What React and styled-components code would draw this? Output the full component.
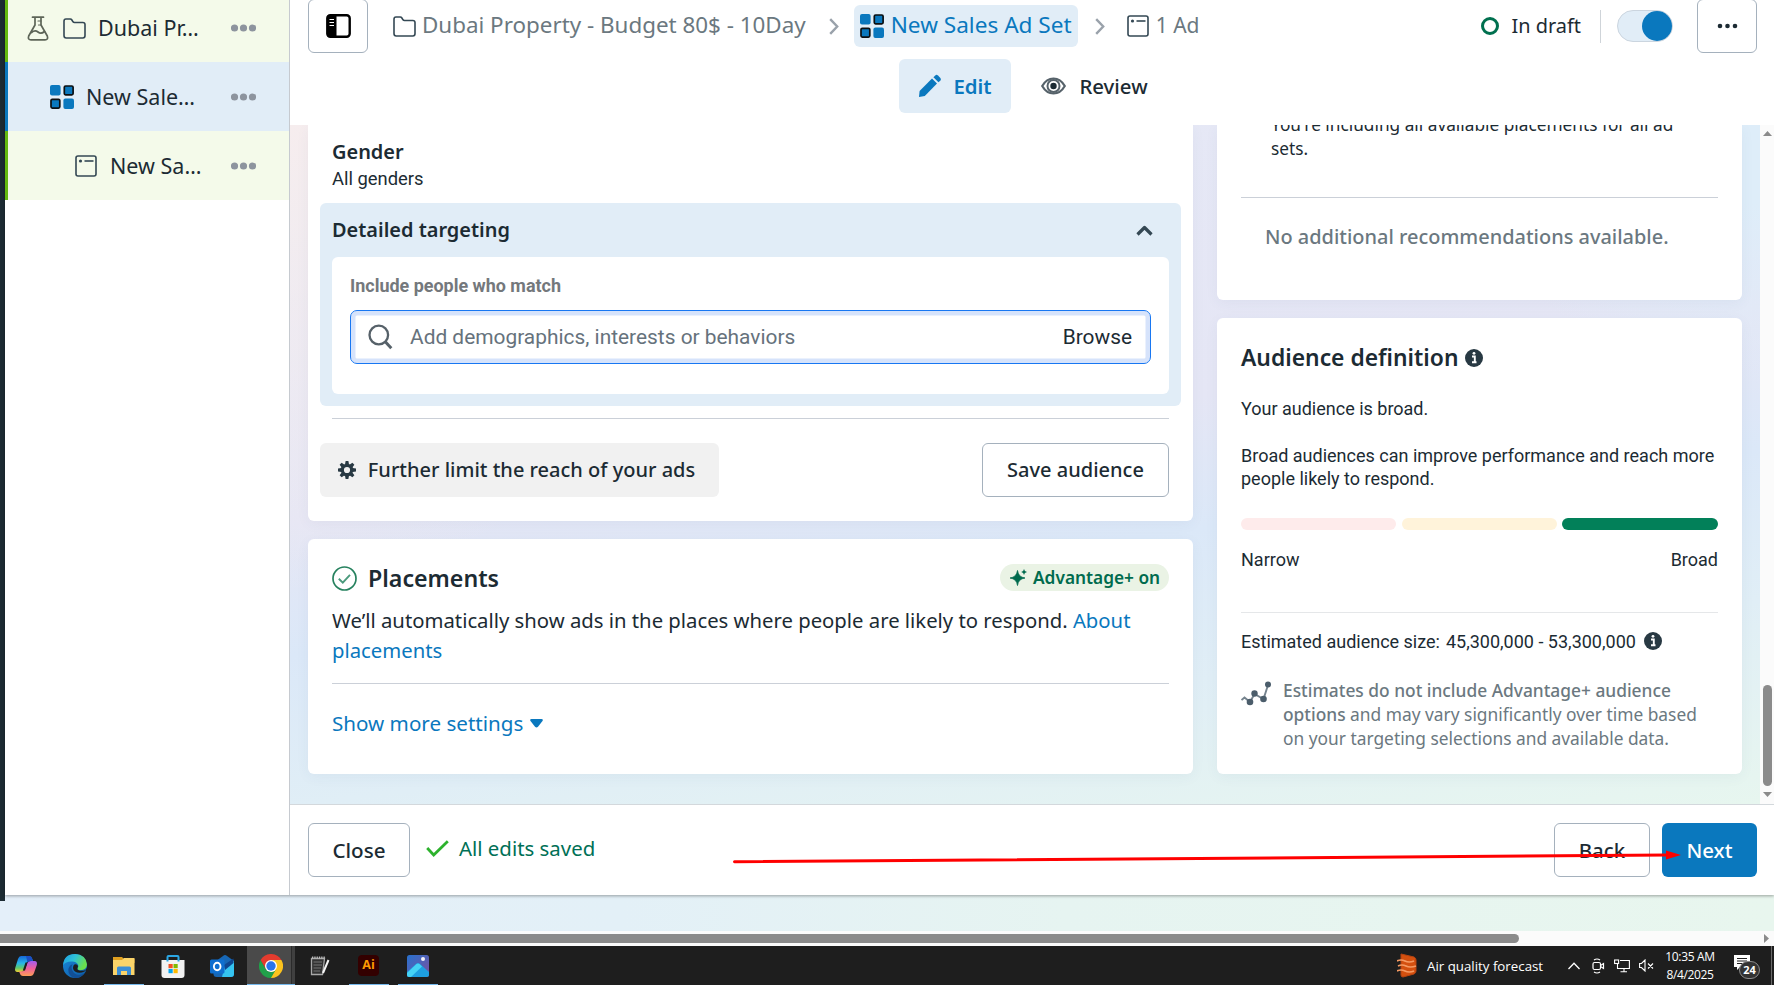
import React from 'react';
import styled, { createGlobalStyle, css } from 'styled-components';

const ui = `"Noto Sans", "Open Sans", sans-serif`;
const roboto = `Roboto, "Liberation Sans", sans-serif`;
const ink = '#1c2b33';
const blue = '#0a78be';
const pale = '#e1edf7';
const muted = '#6b7880';

const Global = createGlobalStyle`
  * { box-sizing: border-box; }
  body { margin: 0; overflow: hidden; font-family: ${ui}; color: ${ink}; }
  svg { display: block; flex: none; }
  p, h2, h3 { margin: 0; }
  button { font-family: inherit; color: inherit; }
`;

/* ---------- shell ---------- */
const Screen = styled.div`
  width: 1774px; height: 985px; overflow: hidden;
  display: flex; flex-direction: column; background: #fff;
`;
const Page = styled.div`
  height: 931px; display: flex; align-items: flex-start;
  background: linear-gradient(90deg, #e4eff9 0%, #e3f0f7 35%, #e6f4f1 60%, #e8f6ee 100%);
`;
const Rail = styled.div`width: 5px; height: 901px; background: #1c2b33;`;
const Panel = styled.div`
  flex: 1; height: 895px; display: flex; background: #fff;
  box-shadow: 0 1px 3px rgba(0, 0, 0, 0.35);
`;

/* ---------- sidebar ---------- */
const Sidebar = styled.nav`width: 285px; border-right: 1px solid #c6cad0;`;
const TreeRow = styled.div`
  height: ${p => p.$h || 69}px;
  display: flex; align-items: center;
  padding: 0 33px ${p => p.$pb || 0}px ${p => p.$indent}px;
  border-left: 3px solid ${p => (p.$selected ? blue : '#64b90f')};
  background: ${p => (p.$selected ? pale : '#f4faea')};
`;
const TreeLabel = styled.span`
  flex: 1; margin-left: ${p => p.$gap}px;
  font-size: 21.5px; line-height: 30px; font-weight: 400; white-space: nowrap;
`;

/* ---------- header ---------- */
const Main = styled.main`flex: 1; display: flex; flex-direction: column;`;
const Header = styled.header`height: 125px; padding: 0 17px 0 18px;`;
const Crumbs = styled.div`height: 52px; display: flex; align-items: center;`;
const SquareButton = styled.button`
  width: 60px; height: 54px; flex: none; padding: 0;
  display: flex; align-items: center; justify-content: center;
  background: #fff; border: 1px solid #a5b1bd; border-radius: 6px;
`;
const Crumb = styled.div`
  display: flex; align-items: center; gap: ${p => p.$gap}px;
  height: 42px; margin-left: ${p => p.$ml}px;
  font-size: ${p => p.$size || 22.4}px; line-height: 28px; white-space: nowrap; color: ${muted};
  ${p => p.$active && css`
    width: 224px; padding-left: 6px; border-radius: 6px;
    background: ${pale}; color: ${blue};
  `}
`;
const CrumbText = styled.span`padding-bottom: 2px;`;
const ChevronSlot = styled.span`margin-left: ${p => p.$ml}px;`;
const Status = styled.div`
  display: flex; align-items: center; gap: 13px; margin-left: auto;
  padding-right: 19px; height: 33px; border-right: 1px solid #cfd4d9;
  font-size: 19.9px;
`;
const StatusRing = styled.span`
  width: 18px; height: 18px; border: 3px solid #00704f; border-radius: 50%;
`;
const Toggle = styled.span`
  width: 56px; height: 32px; margin: 0 24px 0 16px; border-radius: 16px;
  display: flex; justify-content: flex-end; align-items: center;
  background: ${pale}; border: 1px solid #cbd5df;
`;
const Knob = styled.span`width: 30px; height: 30px; border-radius: 50%; background: ${blue};`;
const ModeTabs = styled.div`display: flex; justify-content: center; gap: 11px; margin-top: 7px;`;
const ModeTab = styled.div`
  height: 54px; padding: 0 18px 1px 19px; border-radius: 6px;
  display: flex; align-items: center; gap: ${p => p.$gap}px;
  font-size: 20.4px;
  ${p => p.$active ? css`width: 112px; background: ${pale}; color: ${blue}; font-weight: 600;` : css`font-weight: 500;`}
`;

/* ---------- content ---------- */
const Content = styled.div`
  height: 679px; display: flex; overflow: hidden;
`;
const Canvas = styled.div`
  width: 1470px; display: flex; gap: 24px; padding-left: 18px;
  background:
    radial-gradient(ellipse 420px 470px at 0 0, #f6edee 0%, rgba(246, 237, 238, 0) 100%),
    radial-gradient(ellipse 300px 260px at 100% 0, #deedf9 30%, rgba(222, 237, 249, 0) 100%),
    linear-gradient(172deg, #e6e9f6 0%, #e5e6f5 45%, #dbe8f8 60%, #e0eef6 77%, #e7f6ef 100%);
`;
const Column = styled.div`
  width: ${p => p.$w}px; display: flex; flex-direction: column; gap: 18px;
`;
const Card = styled.section`
  height: ${p => p.$h}px; padding: ${p => p.$pt || 0}px 24px 0; background: #fff;
  border-radius: ${p => (p.$cut ? '0 0 6px 6px' : '6px')};
  box-shadow: 0 3px 14px rgba(60, 70, 110, 0.05);
`;
const Rule = styled.div`
  height: 1px; margin-top: ${p => p.$mt}px; background: ${p => p.$color || '#cbd0d8'};
`;
const FieldName = styled.h3`font-size: 19.95px; line-height: 26px; font-weight: 600;`;
const FieldValue = styled.p`font: 400 18.4px/24px ${roboto}; margin-top: 2px;`;
const Targeting = styled.div`
  height: 203px; margin: 12px -12px 0; padding: 0 12px;
  background: ${pale}; border-radius: 6px;
`;
const TargetingHead = styled.div`
  height: 54px; padding-right: 16px; display: flex; align-items: center; justify-content: space-between;
`;
const TargetingBody = styled.div`
  height: 137px; padding: 17px 18px 0; background: #fff; border-radius: 6px;
`;
const InputLabel = styled.p`font: 700 17.95px/24px ${roboto}; color: #74787c;`;
const SearchBox = styled.div`
  height: 54px; margin-top: 12px; padding: 0 18px 0 17px;
  display: flex; align-items: center;
  border: 1px solid #1877f2; border-radius: 7px; box-shadow: inset 0 0 0 4.5px #d6e3fb;
  font: 400 20.9px/28px ${roboto};
`;
const Placeholder = styled.span`flex: 1; margin-left: 17px; padding-bottom: 1px; color: #66727c;`;
const ActionRow = styled.div`
  display: flex; justify-content: space-between; margin: 24px 0 0 -12px;
`;
const Button = styled.button`
  width: ${p => p.$w}px; height: 54px; padding: 0; border-radius: 6px;
  display: flex; align-items: center; justify-content: center; gap: 12px;
  font-size: ${p => p.$size || 20}px; line-height: 28px; white-space: nowrap; font-weight: 500;
  ${p => p.$kind === 'grey' && css`background: #f1f1f1; border: 0; padding-right: 6px;`}
  ${p => p.$kind === 'primary' && css`background: ${blue}; border: 0; color: #fff;`}
  ${p => !p.$kind && css`background: #fff; border: 1px solid #a5b1bd;`}
`;
const SectionHead = styled.div`height: 30px; display: flex; align-items: center;`;
const SectionTitle = styled.h2`
  font-size: ${p => p.$size}px; line-height: 30px; font-weight: 600; margin-left: ${p => p.$ml || 0}px;
  white-space: nowrap;
`;
const Badge = styled.span`
  width: 169px; height: 27px; margin: 0 0 1px auto; border-radius: 14px; padding: 0 0 1px 10px;
  display: flex; align-items: center; gap: 6px; white-space: nowrap;
  background: #eaf3e5; color: #006b4e; font-size: 17.3px; font-weight: 600;
`;
const Paragraph = styled.p`margin-top: 12px; font-size: 20.3px; line-height: 30px;`;
const Link = styled.span`color: ${blue};`;
const MoreLink = styled.div`
  margin-top: 24px; display: flex; align-items: center; gap: 7px;
  color: ${blue}; font-size: 20.6px; line-height: 30px;
`;

/* ---------- right column ---------- */
const Recommendation = styled.p`
  margin-top: -12px; padding-left: 30px; font-size: 17.25px; line-height: 24px; white-space: nowrap;
`;
const EmptyNote = styled.p`
  margin: 24px 0 0 24px; font-size: 19.95px; line-height: 30px; font-weight: 500; color: ${muted}; white-space: nowrap;
`;
const Body = styled.p`
  margin-top: ${p => p.$mt}px; font: 400 18px/23px ${roboto}; white-space: nowrap;
`;
const Meter = styled.div`
  margin-top: 28px; display: grid; grid-template-columns: 155px 155px 156px;
  justify-content: space-between;
`;
const MeterPart = styled.span`height: 12px; border-radius: 6px; background: ${p => p.$color};`;
const MeterEnds = styled.div`
  margin-top: 18px; display: flex; justify-content: space-between; font: 400 18px/23px ${roboto};
`;
const SizeRow = styled.div`
  margin-top: 17px; display: flex; align-items: center; font: 400 18px/23px ${roboto};
  svg { margin-bottom: 2px; }
`;
const SizeValue = styled.span`margin: 0 8px 0 6px;`;
const Estimate = styled.div`
  margin-top: 25px; display: flex; gap: 12px; color: ${muted};
  font-size: 17.35px; line-height: 24px; white-space: nowrap;
  svg { margin-top: 3px; }
  b { font-weight: 500; }
`;

/* ---------- scrollbars ---------- */
const VScroll = styled.div`
  width: 14px; background: #fbfbfb; display: flex; flex-direction: column; align-items: center;
  padding: 6px 0 7px 1px; justify-content: space-between;
`;
const VThumb = styled.div`width: 9px; height: 101px; border-radius: 5px; background: #8b8b8b;
  margin: auto 0 6px;`;
const HScroll = styled.div`
  height: 15px; background: #fbfbfb; display: flex; align-items: center; justify-content: space-between;
  padding-right: 5px;
`;
const HThumb = styled.div`width: 1519px; height: 9px; background: #8b8b8b; border-radius: 0 5px 5px 0;`;

/* ---------- footer ---------- */
const Footer = styled.footer`
  position: relative; height: 91px; padding: 18px 17px 0 18px; border-top: 1px solid #d3d8dc;
  display: flex; align-items: flex-start;
`;
const Saved = styled.div`
  display: flex; align-items: center; gap: 10px; margin: 10px 0 0 16px;
  font-size: 20.4px; line-height: 30px; color: #007056;
`;
const SavedText = styled.span`padding-bottom: 1px;`;
const FooterActions = styled.div`margin-left: auto; display: flex; gap: 12px;`;
const ArrowOverlay = styled.svg`position: absolute; left: 440px; top: 42px;`;

/* ---------- taskbar ---------- */
const Taskbar = styled.div`
  height: 39px; display: flex; background: #1e1e1e; padding-left: 1px; color: #fff;
  font-family: "Open Sans", "Noto Sans", sans-serif;
`;
const TaskItem = styled.div`
  width: 49px; height: 39px; display: flex; flex-direction: column; align-items: center;
  justify-content: space-between; padding-top: 8px;
  ${p => p.$focused && css`
    background: linear-gradient(90deg, #4a4a4a 44px, #2b2b2b 44px, #2b2b2b 45px, #404040 45px);
    width: 48px; margin: 0 0 0 1px;
  `}
`;
const Running = styled.span`
  width: ${p => p.$w || 40}px; height: 1px;
  background: ${p => (p.$on ? '#76b9ed' : 'transparent')};
`;
const Tray = styled.div`
  margin-left: auto; display: flex; align-items: center; height: 39px; width: 377px;
`;
const Weather = styled.span`width: 116px; margin: 0 25px 0 10px; font-size: 13.3px; white-space: nowrap;`;
const TrayIcons = styled.div`display: flex; align-items: center; gap: 9px;`;
const Clock = styled.div`
  width: 50px; margin-left: 11px; text-align: center; font-size: 12px; line-height: 18px;
  letter-spacing: -0.35px; white-space: nowrap;
`;
const Notice = styled.div`position: relative; width: 26px; height: 24px; margin: 2px 0 0 19px;`;
const Count = styled.span`
  position: absolute; left: 5px; top: 6px; width: 21px; height: 18px; border-radius: 9px;
  border: 1px solid #8a8a8a; background: #333; text-align: center;
  font-size: 11px; line-height: 16px; font-weight: 700;
`;
const DesktopEdge = styled.span`width: 1px; height: 39px; margin-left: auto; margin-right: 2px; background: #6a6a6a;`;

/* ---------- icons ---------- */
const Dots = ({ c = '#8d949e', r = 3.6, gap = 9, w = 25 }) => (
  <svg width={w} height="10" viewBox={`0 0 ${w} 10`} fill={c}>
    {[-1, 0, 1].map(i => <circle key={i} cx={w / 2 + i * gap} cy="5" r={r} />)}
  </svg>
);
const Folder = ({ c = '#344854' }) => (
  <svg width="23" height="21" viewBox="0 0 23 21" fill="none" stroke={c} strokeWidth="1.6" strokeLinejoin="round">
    <path d="M1 3.2Q1 1 3 1H7.2Q8.3 1 8.9 2L10 3.8Q10.500 4.500 11.500 4.500H19.800Q22 4.500 22 6.600V17.600Q22 20 19.800 20H3.200Q1 20 1 17.600Z" />
  </svg>
);
const Flask = () => (
  <svg width="22" height="25" viewBox="0 0 22 25" fill="none" stroke="#5d6558" strokeWidth="1.700" strokeLinejoin="round" strokeLinecap="round">
    <path d="M5.500 1.200H16.500M8 1.500V9L1.700 20Q.5 23.800 4 23.800H18Q21.500 23.800 20.300 20L14 9V1.500" />
    <path d="M4.500 16.500Q8 13.500 11 16T17.500 15.500" />
    <path d="M11 5H14M11.500 9H14" strokeWidth="1.200" />
  </svg>
);
const Grid = () => (
  <svg width="24" height="24" viewBox="0 0 24 24" fill="#0a78be">
    <rect width="10.600" height="10.400" rx="2" />
    <rect x="14.300" y="1" width="8.800" height="8.800" rx="1.300" stroke="#0b0f12" strokeWidth="1.700" />
    <rect x="1" y="14.300" width="8.800" height="8.800" rx="1.300" stroke="#0b0f12" strokeWidth="1.700" />
    <rect x="13.400" y="13.600" width="10.600" height="10.400" rx="2" />
  </svg>
);
const AdIcon = () => (
  <svg width="22" height="22" viewBox="0 0 22 22" fill="none" stroke="#344854" strokeWidth="1.600">
    <rect x="1" y="1" width="20" height="20" rx="2" />
    <path d="M9.500 6H18.500" />
    <circle cx="5.500" cy="6" r="1.600" fill="#344854" stroke="none" />
  </svg>
);
const PanelIcon = () => (
  <svg width="25" height="24" viewBox="0 0 25 24">
    <rect x="1.300" y="1.300" width="22.400" height="21.400" rx="3" fill="#fff" stroke="#000" strokeWidth="2.400" />
    <path d="M3 1H10.500V23H3Q1 23 1 20V4Q1 1 3 1Z" fill="#000" />
    <path d="M3.500 5.500H8M3.500 8.500H8M3.500 11.500H8" stroke="#fff" strokeWidth="1.200" />
  </svg>
);
const ChevronRight = () => (
  <svg width="10" height="17" viewBox="0 0 10 17" fill="none" stroke="#9aa2ab" strokeWidth="2.400">
    <path d="M1.200 1.200L8.200 8.500L1.200 15.800" />
  </svg>
);
const ChevronUp = () => (
  <svg width="17" height="11" viewBox="0 0 17 11" fill="none" stroke="#344854" strokeWidth="3.200" strokeLinejoin="round">
    <path d="M1.500 9.500L8.500 2.500L15.500 9.500" />
  </svg>
);
const Pencil = () => (
  <svg width="24" height="24" viewBox="0 0 24 24" fill={blue}>
    <path d="M1 23L1.600 17L14 4.600L19 9.600L6.800 22Z" />
    <path d="M15.400 3.200L17.300 1.400Q18.600 .3 20 1.500L22.400 4Q23.500 5.300 22.400 6.600L20.500 8.300Z" />
  </svg>
);
const Eye = () => (
  <svg width="25" height="18" viewBox="0 0 25 18" fill="none" stroke="#56626a">
    <path d="M1.200 9Q5.500 1.500 12.500 1.500T23.800 9Q19.500 16.500 12.500 16.500T1.200 9Z" strokeWidth="2.200" />
    <circle cx="12.500" cy="9" r="6" strokeWidth="2" />
    <circle cx="12.500" cy="9" r="3.200" fill="#1c2b33" stroke="none" />
  </svg>
);
const Search = () => (
  <svg width="25" height="26" viewBox="0 0 25 26" fill="none" stroke="#566169" strokeWidth="2.300">
    <circle cx="10.800" cy="11" r="9.300" />
    <path d="M17.300 17.800L23.300 24.300" strokeWidth="3" />
  </svg>
);
const Gear = () => (
  <svg width="18" height="18" viewBox="-9 -9 18 18" fill="#283943">
    {[0, 45, 90, 135, 180, 225, 270, 315].map(a => (
      <path key={a} d="M-2-5.500L-1.400-9H1.400L2-5.500Z" transform={`rotate(${a})`} />
    ))}
    <circle r="4.700" fill="none" stroke="#283943" strokeWidth="3.200" />
  </svg>
);
const CheckCircle = () => (
  <svg width="25" height="25" viewBox="0 0 25 25" fill="none" stroke="#27825f" strokeWidth="1.700">
    <circle cx="12.500" cy="12.500" r="11.500" />
    <path d="M6.800 12.800L10.800 16.600L18 8.800" strokeWidth="1.900" stroke="#4a9a7c" />
  </svg>
);
const Sparkle = () => (
  <svg width="17" height="17" viewBox="0 0 17 17" fill="#006b4e">
    <path d="M7.500 1.500Q8.300 8.200 15 9Q8.300 9.800 7.500 16.500Q6.700 9.800 0 9Q6.700 8.200 7.500 1.500Z" stroke="#006b4e" strokeWidth=".8" />
    <path d="M14 0Q14.300 2.500 17 3Q14.300 3.400 14 6Q13.700 3.400 11.200 3Q13.700 2.500 14 0Z" />
  </svg>
);
const Info = () => (
  <svg width="18" height="18" viewBox="0 0 18 18">
    <circle cx="9" cy="9" r="9" fill="#283943" />
    <path d="M7 7.500H9.800V13M7 13.300H11.500" stroke="#fff" strokeWidth="1.900" fill="none" />
    <circle cx="9" cy="4.300" r="1.400" fill="#fff" />
  </svg>
);
const Trend = () => (
  <svg width="30" height="25" viewBox="0 0 30 25" fill="#4b5d6b">
    <path d="M.5 19L3.500 16.500L9 21L13.500 13L22.500 18L27 4" fill="none" stroke="#75838e" strokeWidth="1.900" />
    <circle cx="9" cy="21" r="3.300" /><circle cx="13.500" cy="12.500" r="3.200" />
    <circle cx="22.500" cy="18" r="3.300" /><circle cx="27" cy="3.500" r="3" />
  </svg>
);
const Caret = ({ w = 13, h = 9, c = blue, d = 'M1.500 0H11.500Q13.500 0 12.500 2L8 7.800Q6.500 9 5 7.800L.5 2Q-.5 0 1.500 0Z' }) => (
  <svg width={w} height={h} viewBox={`0 0 ${w} ${h}`} fill={c}><path d={d} /></svg>
);
const Tick = () => (
  <svg width="23" height="17" viewBox="0 0 23 17" fill="none" stroke="#2db22d" strokeWidth="2.800">
    <path d="M1.200 8L7.700 15L21.800 1.200" />
  </svg>
);

const Copilot = () => (
  <svg width="24" height="24" viewBox="0 0 24 24">
    <defs>
      <linearGradient id="cpA" x1="0" y1="0" x2="0" y2="1"><stop offset="0" stopColor="#1668d8" /><stop offset=".45" stopColor="#27b5e8" /><stop offset=".75" stopColor="#5fca6b" /><stop offset="1" stopColor="#f2cf31" /></linearGradient>
      <linearGradient id="cpB" x1="0" y1="0" x2="0" y2="1"><stop offset="0" stopColor="#a45cf0" /><stop offset=".5" stopColor="#ef5f9c" /><stop offset="1" stopColor="#fb9d55" /></linearGradient>
    </defs>
    <path d="M7 2H15Q17.500 2 18.300 5L19 7H15.500Q13 7 12 10L10.500 15Q9.500 18 7 18H3.500Q.3 18 1.200 14L4 5Q5 2 7 2Z" fill="url(#cpA)" />
    <path d="M17 7H20.500Q23.700 7 22.800 11L20 19Q19 22 16.500 22H9Q6.500 22 5.700 19L5 17.500H7.500Q10.500 17.500 11.500 14L13.300 9Q14 7 17 7Z" fill="url(#cpB)" />
    <path d="M12 2H15Q17.500 2 18.300 5L19 7H15.500L13.500 8.500Z" fill="#1b4fc4" />
    <path d="M11.500 8.500H13.500L11 16.500H8.800Z" fill="#1e1e1e" />
  </svg>
);
const Edge = () => (
  <svg width="24" height="24" viewBox="0 0 24 24">
    <defs>
      <linearGradient id="edA" x1="0" y1="0" x2="1" y2=".4"><stop offset="0" stopColor="#1b9de2" /><stop offset=".5" stopColor="#2fc2d8" /><stop offset="1" stopColor="#6be04b" /></linearGradient>
      <linearGradient id="edB" x1="0" y1="0" x2="1" y2="1"><stop offset="0" stopColor="#1b88d8" /><stop offset="1" stopColor="#0c59a4" /></linearGradient>
    </defs>
    <circle cx="12" cy="12" r="12" fill="url(#edB)" />
    <path d="M.1 11Q1 0 12 0Q23 .5 24 10.500Q23.500 16 17.500 16.300Q13.500 16 14.500 14Q16 12.500 15 10.500Q13 7.500 9.500 7.500Q3 7 .1 11Z" fill="url(#edA)" />
    <path d="M9.500 10Q7 15 11 19Q15.500 22.500 21 19.500Q17 25 11 23.800Q4.500 21 5.500 14.500Q6.500 11 9.500 10Z" fill="#124f96" />
    <path d="M14.500 14Q15.500 12.500 14.500 11Q12 9.500 10.500 11.500Q9 15 12 17.500Q16 20 21.500 17.500L24 14V17L22.300 16.200Q19.500 17.200 16 16.400Q13.700 15.600 14.500 14Z" fill="#1e1e1e" />
  </svg>
);
const Explorer = () => (
  <svg width="22" height="24" viewBox="0 0 22 24">
    <path d="M0 3H9L11 5H21.500V9H0Z" fill="#e0a020" />
    <path d="M0 6H9L11 4H21.500V21H0Z" fill="#fbd469" />
    <path d="M4 21V14Q4 12.500 5.500 12.500H16.500Q18 12.500 18 14V21H14V17H8V21Z" fill="#3c8fd6" />
  </svg>
);
const Store = () => (
  <svg width="24" height="24" viewBox="0 0 24 24">
    <path d="M6.500 7V3Q6.500 2 7.500 2H16.500Q17.500 2 17.500 3V7" fill="none" stroke="#2ba7e4" strokeWidth="2" />
    <path d="M.5 6H23.500V21Q23.500 24 20.500 24H3.500Q.5 24 .5 21Z" fill="#f2f2f2" />
    <rect x="7.500" y="10" width="4.200" height="4.200" fill="#f25022" /><rect x="12.500" y="10" width="4.200" height="4.200" fill="#7fba00" />
    <rect x="7.500" y="15" width="4.200" height="4.200" fill="#00a4ef" /><rect x="12.500" y="15" width="4.200" height="4.200" fill="#ffb900" />
    <path d="M6.500 6V7.500M17.500 6V7.500" stroke="#2ba7e4" strokeWidth="2" />
  </svg>
);
const Outlook = () => (
  <svg width="24" height="24" viewBox="0 0 24 24">
    <path d="M3.500 9L14 1.300Q15 .8 16 1.300L24 7V20Q24 23 21 23H6.500Q3.500 23 3.500 20Z" fill="#1767b5" />
    <path d="M15 11L24 6.500V20Q24 23 21 23H12Z" fill="#35c4f0" />
    <path d="M14 11L23.500 4.500V9L15 16Z" fill="#0f4690" />
    <rect y="5.500" width="14.500" height="14" rx="1.500" fill="#0f6fd0" />
    <ellipse cx="7.200" cy="12.500" rx="3.300" ry="3.700" fill="none" stroke="#fff" strokeWidth="1.900" />
  </svg>
);
const Chrome = () => (
  <svg width="24" height="24" viewBox="0 0 24 24">
    <path d="M12 12L12 6H22.400A12 12 0 0 1 12 24Z" fill="#fcc31e" />
    <path d="M12 24A12 12 0 0 1 1.600 6L6.800 15A6 6 0 0 0 17.200 15Z" fill="#21a04a" />
    <path d="M1.600 6L6.800 15L12 6H22.400A12 12 0 0 0 1.600 6Z" fill="#e33b2e" />
    <circle cx="12" cy="12" r="6" fill="#fff" /><circle cx="12" cy="12" r="4.700" fill="#2a74ea" />
  </svg>
);
const Notepad = () => (
  <svg width="20" height="24" viewBox="0 0 20 24">
    <path d="M1.500 4.500H14.500L12.500 20.500H1.500Z" fill="#333" stroke="#a8a8a8" strokeWidth="1.300" />
    <path d="M2 3.500H15" stroke="#bdbdbd" strokeWidth="2" strokeDasharray="1.300 1" />
    <path d="M3.500 8H12M3.500 11H12M3.500 14H11M3.500 17H10" stroke="#777" />
    <path d="M18.500 6L13 19" stroke="#f5f5f5" strokeWidth="2" />
  </svg>
);
const AiBox = styled.span`
  width: 21px; height: 21px; margin-top: 1px; border-radius: 4px; background: #330000; color: #ff9a00;
  font: 700 12.500px/20px "Open Sans", sans-serif; text-align: center;
`;
const Photos = () => (
  <svg width="22" height="24" viewBox="0 0 22 24">
    <defs><linearGradient id="phA" x1="0" y1="0" x2="1" y2="1"><stop offset="0" stopColor="#2772cf" /><stop offset="1" stopColor="#7d4f9c" /></linearGradient></defs>
    <rect y="1" width="22" height="22" rx="2.500" fill="url(#phA)" />
    <path d="M0 18L9.500 9.500Q11 8.500 12.500 9.500L22 18V20.500Q22 23 19.500 23H2.500Q0 23 0 20.500Z" fill="#1e9fe0" />
    <path d="M0 19L9.500 10Q11 9 12.500 10L15 12.500L4 23H2.500Q0 23 0 20.500Z" fill="#45d3f5" />
    <circle cx="16" cy="5" r="2" fill="#f4f1f8" />
  </svg>
);
const AirIcon = () => (
  <svg width="20" height="25" viewBox="0 0 20 25">
    <path d="M4 1L17 4Q19 5 19 7V18Q19 20 17 21L6 24Q4 24 4 22Z" fill="#d4500f" stroke="#b64310" />
    <path d="M0 8Q4 6 8 8T17 8M1 13Q5 11 9 13T19 13M0 18Q4 16 8 18T17 18" fill="none" stroke="#f59a63" strokeWidth="1.700" />
  </svg>
);
const TrayUp = () => (
  <svg width="12" height="8" viewBox="0 0 12 8" fill="none" stroke="#fff" strokeWidth="1.300"><path d="M.5 7L6 1.300L11.500 7" /></svg>
);
const Meet = () => (
  <svg width="13" height="16" viewBox="0 0 13 16" fill="none" stroke="#fff" strokeWidth="1.200">
    <rect x="1" y="4.500" width="7.500" height="7" rx="1.500" /><path d="M8.500 7.500L11.500 5.500V10.500L8.500 8.500M2 2Q5 0 8 2M2 14Q5 16 8 14" />
  </svg>
);
const Monitor = () => (
  <svg width="16" height="14" viewBox="0 0 16 14" fill="none" stroke="#fff" strokeWidth="1.100">
    <path d="M6 1.500H15.400V9.500H3.500V5M10 9.500V12.500M6.500 12.800H13" /><rect x=".6" y="1" width="4" height="3.500" />
  </svg>
);
const Mute = () => (
  <svg width="15" height="13" viewBox="0 0 15 13" fill="none" stroke="#fff" strokeWidth="1.100">
    <path d="M.6 4.500H2.500L6 1V12L2.500 8.500H.6ZM9 4.500L14 9.500M14 4.500L9 9.500" />
  </svg>
);
const Bubble = () => (
  <svg width="16" height="16" viewBox="0 0 16 16">
    <path d="M0 0H16V12H6L3 15V12H0Z" fill="#fff" />
    <path d="M3 3.500H13M3 6H13M3 8.500H10" stroke="#1e1e1e" />
  </svg>
);

const apps = [
  [Copilot], [Edge], [Explorer, true], [Store], [Outlook], [Chrome, true, true],
  [Notepad], [() => <AiBox>Ai</AiBox>, true], [Photos, true],
];

export default function App() {
  return (
    <Screen>
      <Global />
      <Page>
        <Rail />
        <Panel>
          <Sidebar>
            <TreeRow $h={62} $pb={6} $indent={19}>
              <Flask />
              <ChevronSlot $ml={14}><Folder /></ChevronSlot>
              <TreeLabel $gap={12}>Dubai Pr…</TreeLabel>
              <Dots />
            </TreeRow>
            <TreeRow $selected $indent={42}>
              <Grid />
              <TreeLabel $gap={12}>New Sale…</TreeLabel>
              <Dots />
            </TreeRow>
            <TreeRow $indent={67}>
              <AdIcon />
              <TreeLabel $gap={13}>New Sa…</TreeLabel>
              <Dots />
            </TreeRow>
          </Sidebar>

          <Main>
            <Header>
              <Crumbs>
                <SquareButton><PanelIcon /></SquareButton>
                <Crumb $ml={25} $gap={6}><Folder /><CrumbText>Dubai Property - Budget 80$ - 10Day</CrumbText></Crumb>
                <ChevronSlot $ml={23}><ChevronRight /></ChevronSlot>
                <Crumb $active $ml={15} $gap={7} $size={22.6}><Grid /><CrumbText>New Sales Ad Set</CrumbText></Crumb>
                <ChevronSlot $ml={17}><ChevronRight /></ChevronSlot>
                <Crumb $ml={22} $gap={7} $size={21}><AdIcon /><CrumbText>1 Ad</CrumbText></Crumb>
                <Status><StatusRing /><CrumbText>In draft</CrumbText></Status>
                <Toggle><Knob /></Toggle>
                <SquareButton><Dots c="#1c2b33" r={2.3} gap={7.500} /></SquareButton>
              </Crumbs>
              <ModeTabs>
                <ModeTab $active $gap={11}><Pencil />Edit</ModeTab>
                <ModeTab $gap={13}><Eye />Review</ModeTab>
              </ModeTabs>
            </Header>

            <Content>
              <Canvas>
                <Column $w={885}>
                  <Card $h={396} $pt={14} $cut>
                    <FieldName>Gender</FieldName>
                    <FieldValue>All genders</FieldValue>
                    <Targeting>
                      <TargetingHead>
                        <FieldName>Detailed targeting</FieldName>
                        <ChevronUp />
                      </TargetingHead>
                      <TargetingBody>
                        <InputLabel>Include people who match</InputLabel>
                        <SearchBox>
                          <Search />
                          <Placeholder>Add demographics, interests or behaviors</Placeholder>
                          Browse
                        </SearchBox>
                      </TargetingBody>
                    </Targeting>
                    <Rule $mt={12} />
                    <ActionRow>
                      <Button $kind="grey" $w={399}><Gear />Further limit the reach of your ads</Button>
                      <Button $w={187}>Save audience</Button>
                    </ActionRow>
                  </Card>
                  <Card $h={235} $pt={24}>
                    <SectionHead>
                      <CheckCircle />
                      <SectionTitle $size={23.2} $ml={11}>Placements</SectionTitle>
                      <Badge><Sparkle />Advantage+ on</Badge>
                    </SectionHead>
                    <Paragraph>
                      We’ll automatically show ads in the places where people are likely to respond. <Link>About placements</Link>
                    </Paragraph>
                    <Rule $mt={18} />
                    <MoreLink>Show more settings<Caret /></MoreLink>
                  </Card>
                </Column>

                <Column $w={525}>
                  <Card $h={175} $cut>
                    <Recommendation>You're including all available placements for all ad<br />sets.</Recommendation>
                    <Rule $mt={36} />
                    <EmptyNote>No additional recommendations available.</EmptyNote>
                  </Card>
                  <Card $h={456} $pt={25}>
                    <SectionHead>
                      <SectionTitle $size={22.85}>Audience definition</SectionTitle>
                      <ChevronSlot $ml={7}><Info /></ChevronSlot>
                    </SectionHead>
                    <Body $mt={24}>Your audience is broad.</Body>
                    <Body $mt={24}>Broad audiences can improve performance and reach more<br />people likely to respond.</Body>
                    <Meter>
                      <MeterPart $color="#feebeb" /><MeterPart $color="#fff3da" /><MeterPart $color="#028059" />
                    </Meter>
                    <MeterEnds><span>Narrow</span><span>Broad</span></MeterEnds>
                    <Rule $mt={41} $color="#e5e7e9" />
                    <SizeRow>
                      <span>Estimated audience size:</span>
                      <SizeValue>45,300,000 - 53,300,000</SizeValue>
                      <Info />
                    </SizeRow>
                    <Estimate>
                      <Trend />
                      <p>
                        <b>Estimates do not include Advantage+ audience<br />options</b> and may vary significantly over time based<br />on your targeting selections and available data.
                      </p>
                    </Estimate>
                  </Card>
                </Column>
              </Canvas>
              <VScroll>
                <Caret w={9} h={5} c="#8b8b8b" d="M0 5L4.500 0L9 5Z" />
                <VThumb />
                <Caret w={9} h={5} c="#8b8b8b" d="M0 0H9L4.500 5Z" />
              </VScroll>
            </Content>

            <Footer>
              <Button $w={102} $size={20.6}>Close</Button>
              <Saved><Tick /><SavedText>All edits saved</SavedText></Saved>
              <FooterActions>
                <Button $w={96} $size={20.4}>Back</Button>
                <Button $w={95} $kind="primary" $size={20.4}>Next</Button>
              </FooterActions>
              <ArrowOverlay width="960" height="24" viewBox="0 0 960 24">
                <path d="M4.500 14.800L938 8" stroke="#ff0000" strokeWidth="3" strokeLinecap="round" />
                <path d="M936 3.500L951 8L936 12.500Z" fill="#ff0000" />
              </ArrowOverlay>
            </Footer>
          </Main>
        </Panel>
      </Page>
      <HScroll>
        <HThumb />
        <Caret w={5} h={9} c="#8b8b8b" d="M0 0L5 4.500L0 9Z" />
      </HScroll>
      <Taskbar>
        {apps.map(([Icon, on, focused], i) => (
          <TaskItem key={i} $focused={focused}><Icon /><Running $on={on} $w={focused ? 48 : 40} /></TaskItem>
        ))}
        <Tray>
          <AirIcon />
          <Weather>Air quality forecast</Weather>
          <TrayIcons><TrayUp /><ChevronSlot $ml={3}><Meet /></ChevronSlot><Monitor /><Mute /></TrayIcons>
          <Clock>10:35 AM<br />8/4/2025</Clock>
          <Notice><Bubble /><Count>24</Count></Notice>
          <DesktopEdge />
        </Tray>
      </Taskbar>
    </Screen>
  );
}
